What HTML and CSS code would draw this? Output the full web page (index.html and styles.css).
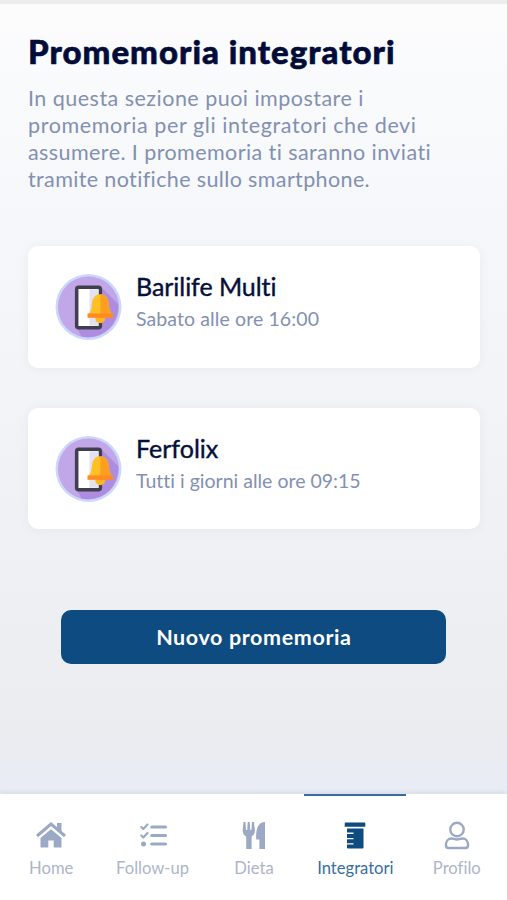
FILE: index.html
```html
<!DOCTYPE html>
<html lang="it">
<head>
<meta charset="utf-8">
<title>Promemoria integratori</title>
<link rel="stylesheet" href="styles.css">
</head>
<body>
<svg class="defs" width="0" height="0" aria-hidden="true">
  <symbol id="reminder" viewBox="0 0 68 68">
    <circle cx="34" cy="34" r="33.5" fill="#cbd8fb"/>
    <circle cx="34" cy="34" r="31" fill="#c1a6e8"/>
    <path d="M47 14 64 31A31 31 0 0 1 27 64L22 55H46Z" fill="#ae8ce0"/>
    <rect x="22" y="14" width="24" height="41" rx="2" fill="#fff" stroke="#403f50" stroke-width="3.6"/>
    <path d="M35 16H44.200V53H35Z" fill="#e3e1f2"/>
    <path d="M41 45h10v1a5 5 0 0 1-10 0Z" fill="#ffb71c" transform="translate(0 -.5)"/>
    <path d="M33 42c4-3 4-7 4.500-12 .7-6 4-9 8.500-9s7.800 3 8.500 9c.5 5 .5 9 4.500 12Z" fill="#ffc023"/>
    <path d="M46 21c4.500 0 7.800 3 8.500 9 .5 5 .5 9 4.500 12H46Z" fill="#ff9f20"/>
    <path d="M33 40.500H59V45H33Z" fill="#ff8b22"/>
  </symbol>
</svg>
<main class="page">
  <h1 class="title">Promemoria integratori</h1>
  <p class="intro"><span class="l1">In questa sezione puoi impostare i</span><br><span class="l2">promemoria per gli integratori che devi</span><br><span class="l3">assumere. I promemoria ti saranno inviati</span><br><span class="l4">tramite notifiche sullo smartphone.</span></p>
  <section class="cards">
    <article class="card">
      <svg class="card-icon"><use href="#reminder"/></svg>
      <div><h2 class="name multi">Barilife Multi</h2><p class="when sabato">Sabato alle ore 16:00</p></div>
    </article>
    <article class="card">
      <svg class="card-icon"><use href="#reminder"/></svg>
      <div><h2 class="name">Ferfolix</h2><p class="when">Tutti i giorni alle ore 09:15</p></div>
    </article>
  </section>
  <button class="new">Nuovo promemoria</button>
</main>
<nav class="tabs">
  <a class="tab">
    <svg class="icon" viewBox="0 0 32 32"><path d="M2 17 16 5 30 17" fill="none" stroke="currentColor" stroke-width="3"/><path d="M22 4h4.500v10L22 10Z" fill="currentColor"/><path d="M16 10.200 26.500 19v9.500h-7.800v-7h-5.400v7H5.500V19Z" fill="currentColor"/></svg>
    <span>Home</span>
  </a>
  <a class="tab">
    <svg class="icon" viewBox="0 0 32 32"><g fill="none" stroke="currentColor" stroke-linecap="round" stroke-linejoin="round"><path d="M14.800 8H28.500M14.800 16.500H28.500M14.800 25H28.500" stroke-width="3.200"/><path d="m4.300 8 2 2 4.200-4.400M4.300 16.500l2 2 4.200-4.400" stroke-width="2.200"/></g><circle cx="6.500" cy="25" r="2.500" fill="currentColor"/></svg>
    <span>Follow-up</span>
  </a>
  <a class="tab">
    <svg class="icon" viewBox="0 0 32 32"><path d="M5.500 3h2l.5 8h1.200l.5-8h2l.5 8h1.200l.5-8h2l1 8c0 4-1.500 5.300-3.300 6.500V30H8.200V17.500C6.200 16.300 4.700 15 4.700 11ZM27 3v27h-5.600v-9.500h-3.200C17.800 12 19 3 27 3Z" fill="currentColor"/></svg>
    <span>Dieta</span>
  </a>
  <a class="tab active">
    <svg class="icon" viewBox="0 0 32 32"><path d="M6.500 3.500h19a.8.8 0 0 1 .8.8v3.400h-20.600V4.300a.8.8 0 0 1 .8-.8ZM8 9.500h16.500v19a1 1 0 0 1-1 1H9a1 1 0 0 1-1-1v-3h6.500v-1.300H8v-4h6.500v-1.300H8v-4h6.500v-1.300H8Z" fill="currentColor"/></svg>
    <span>Integratori</span>
  </a>
  <a class="tab">
    <svg class="icon" viewBox="0 0 32 32"><g fill="none" stroke="currentColor" stroke-width="2.400"><circle cx="16" cy="10.500" r="6.700"/><path d="M10.500 19.500c2 0 3 1 5.500 1s3.500-1 5.500-1c3.500 0 5.600 3 5.600 6.500 0 2-1 3-2.600 3H7.500c-1.600 0-2.600-1-2.600-3 0-3.500 2.100-6.500 5.600-6.500Z"/></g></svg>
    <span>Profilo</span>
  </a>
</nav>
</body>
</html>
```
FILE: styles.css
```css
* { box-sizing: border-box; }
body {
  margin: 0;
  height: 900px;
  display: flex;
  flex-direction: column;
  overflow: hidden;
  font-family: Lato, "Liberation Sans", sans-serif;
  font-variant-ligatures: none;
  background: #fff;
}
.defs { display: none; }
h1, h2, p { margin: 0; font-weight: 400; }
.page {
  height: 794px;
  flex: none;
  border-top: 4px solid #ededee;
  padding: 27px 27px 0 28px;
  background: linear-gradient(#fcfcfd, #f5f7fa 230px, #eff1f5 520px, #ebecf0 730px, #e8ecf5);
}
.title {
  font-size: 33px;
  line-height: 40px;
  font-weight: 900;
  letter-spacing: 1px;
  -webkit-text-stroke: 0.6px #020c39;
  color: #020c39;
  white-space: nowrap;
}
.intro {
  margin-top: 14px;
  font-size: 21.500px;
  line-height: 27px;
  color: #8390b1;
  white-space: nowrap;
}
.l1 { letter-spacing: 0.480px; }
.l2 { letter-spacing: 0.600px; }
.l3 { letter-spacing: 0.420px; }
.l4 { letter-spacing: 0.370px; }
.cards {
  margin-top: 53px;
  display: flex;
  flex-direction: column;
  gap: 40px;
}
.card {
  height: 121.500px;
  border-radius: 10px;
  background: #fff;
  box-shadow: 0 1px 12px rgba(40, 50, 80, 0.05);
  display: flex;
  gap: 14px;
  padding: 26px 27px 0;
}
.card-icon { width: 67px; height: 68px; margin-top: 1px; flex: none; }
.name {
  font-size: 25px;
  line-height: 28px;
  color: #050f3b;
  -webkit-text-stroke: 0.4px #050f3b;
}
.multi { letter-spacing: -0.050px; }
.when {
  margin-top: 6px;
  font-size: 19.500px;
  line-height: 26px;
  color: #8390b1;
}
.sabato { letter-spacing: 0.100px; }
.new {
  display: block;
  width: 385px;
  height: 54px;
  margin: 81px 0 0 33.400px;
  padding: 0;
  border: 0;
  border-radius: 10px;
  background: #0e4b80;
  color: #fff;
  font: 700 21.500px/54px Lato, sans-serif;
  letter-spacing: 0.620px;
}
.tabs {
  flex: 1;
  display: grid;
  grid-template-columns: repeat(5, 1fr);
  background: #fff;
  box-shadow: 0 -1px 5px rgba(50, 55, 80, 0.12);
}
.tab {
  border-top: 2px solid transparent;
  padding: 23px 0 0 1px;
  display: flex;
  flex-direction: column;
  align-items: center;
  color: #9ba9c5;
  font-size: 16.600px;
  line-height: 22px;
}
.tab span { margin-top: 6px; color: #adb5c9; }
.icon { width: 32px; height: 32px; }
.tab.active { border-top-color: #386c9d; color: #0e4b80; }
.tab.active span { color: #386f9f; }
```
